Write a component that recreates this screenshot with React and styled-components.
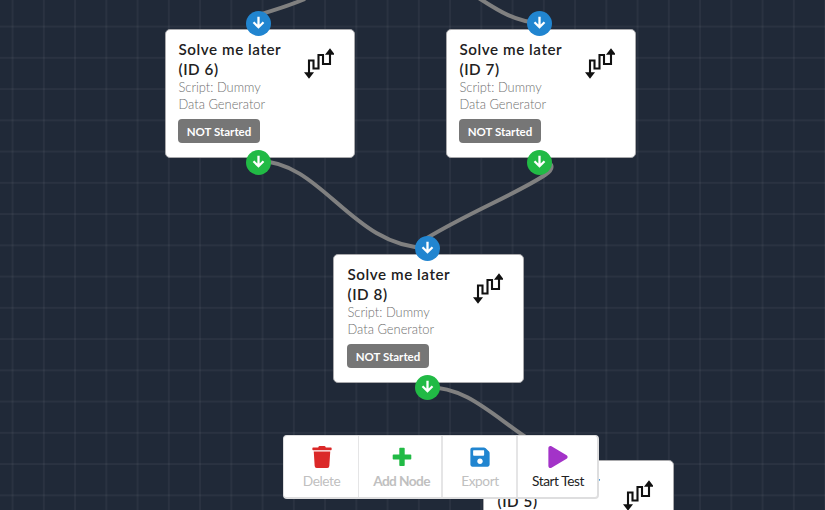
import React from "react";
import styled, { createGlobalStyle } from "styled-components";
import { FaTrash, FaSave, FaPlay } from "react-icons/fa";

const GlobalStyle = createGlobalStyle`
  * { box-sizing: border-box; }
  body { margin: 0; font-family: Lato, "Liberation Sans", sans-serif; overflow: hidden; }
`;

const Canvas = styled.main`
  position: relative;
  width: 825px;
  height: 510px;
  overflow: hidden;
  background-color: #202938;
  background-image:
    linear-gradient(to right, rgba(255, 255, 255, 0.042) 1.5px, transparent 1.5px),
    linear-gradient(to bottom, rgba(255, 255, 255, 0.042) 1.5px, transparent 1.5px);
  background-size: 31.25px 31.25px;
  background-position: 11.6px 25.6px;
`;

const Edges = styled.svg`
  position: absolute;
  inset: 0;
  fill: none;
  stroke: #808080;
  stroke-width: 4;
`;

const NodeCard = styled.article`
  position: absolute;
  left: ${(p) => p.$x}px;
  top: ${(p) => p.$y}px;
  width: ${(p) => 190 + p.$inset}px;
  height: 129px;
  padding: 9.5px 20.5px 0 ${(p) => 12.5 + p.$inset}px;
  display: flex;
  justify-content: space-between;
  align-items: flex-start;
  background: #fff;
  border: 1px solid #a9a9ac;
  border-radius: 5px;
`;

const NodeText = styled.div`
  width: 114px;
  white-space: nowrap;
`;

const Title = styled.h3`
  margin: 0;
  font-size: 15.2px;
  line-height: 20px;
  font-weight: 600;
  letter-spacing: 0.55px;
  color: #212121;
`;

const Script = styled.p`
  margin: 0;
  font-size: 12.9px;
  line-height: 17px;
  font-weight: 300;
  color: #707070;
`;

const Badge = styled.span`
  display: flex;
  align-items: center;
  justify-content: center;
  width: 82px;
  height: 24px;
  margin: 6px 0 0 -0.5px;
  border-radius: 4px;
  background: #767676;
  color: #fff;
  font-size: 11.5px;
  font-weight: 700;
`;

const Signal = styled.svg`
  width: 30px;
  height: 32px;
  margin-top: 8px;
  flex: none;
  fill: none;
  stroke: #111;
  stroke-width: 2.1;
`;

const Port = styled.span`
  position: absolute;
  left: ${(p) => 79.5 + p.$inset}px;
  ${(p) => (p.$out ? "top: 120px;" : "top: -19px;")}
  width: 25px;
  height: 25px;
  border-radius: 50%;
  display: grid;
  place-items: center;
  background: ${(p) => (p.$out ? "#21ba45" : "#2185d0")};
`;

const Arrow = styled.svg`
  width: 13px;
  height: 13px;
  margin-bottom: 2px;
  fill: none;
  stroke: #fff;
  stroke-width: 2.3;
`;

const Toolbar = styled.nav`
  position: absolute;
  left: 283px;
  top: 435px;
  width: 316px;
  height: 64px;
  display: grid;
  grid-template-columns: 75px 84px 75px 1fr;
  background: #fff;
  border: 1px solid #dededf;
  border-right-width: 2px;
  border-bottom-width: 2px;
  border-radius: 4px;
  overflow: hidden;
`;

const Tool = styled.button`
  display: flex;
  flex-direction: column;
  align-items: center;
  padding: 10px 0 0 ${(p) => p.$shift || 1}px;
  border: 0;
  border-right: ${(p) => p.$divider || 0}px solid #e5e5e6;
  background: none;
  font: ${(p) => p.$weight || 400} 13.7px/17px Lato, sans-serif;
  letter-spacing: ${(p) => (p.$weight ? -0.6 : -0.42)}px;
  color: ${(p) => (p.$active ? "#222" : "#c0c0c0")};
  white-space: nowrap;
  svg { width: 22px; height: 22px; margin-bottom: 4px; color: ${(p) => p.$tint}; }
`;

const nodes = [
  { id: 6, x: 165, y: 28.5, inset: 0 },
  { id: 7, x: 446, y: 28.5, inset: 0 },
  { id: 8, x: 333, y: 253.5, inset: 1 },
  { id: 5, x: 483, y: 460, inset: 1 },
];

function DownArrow() {
  return (
    <Arrow viewBox="0 0 13 13">
      <path d="M6.5 0.8V11M1.5 6.3L6.5 11.2L11.5 6.3" />
    </Arrow>
  );
}

function Node({ id, x, y, inset }) {
  return (
    <NodeCard $x={x} $y={y} $inset={inset}>
      <NodeText>
        <Title>Solve me later<br />(ID {id})</Title>
        <Script>Script: Dummy<br />Data Generator</Script>
        <Badge>NOT Started</Badge>
      </NodeText>
      <Signal viewBox="0 0 30 32">
        <path d="M5 29V13.5H9.5V21.5H14.5V8H19V17H26V3" />
        <path d="M1.500 26H8.500L5 30.500ZM22.500 7H29.500L26 2.500Z" fill="#111" strokeWidth="1.5" />
      </Signal>
      <Port $inset={inset}><DownArrow /></Port>
      <Port $inset={inset} $out><DownArrow /></Port>
    </NodeCard>
  );
}

export default function App() {
  return (
    <>
      <GlobalStyle />
      <Canvas>
        <Edges width="825" height="510">
          <path d="M258 15C268 12 286 7 305 -1" />
          <path d="M474 -5C496 9 514 22 540 23" />
          <path d="M258 161C322 161 352 247 427 248" />
          <path d="M540 161C552 160 556 168 545 175C516 194 470 212 427 238" />
          <path d="M427 387C464 387 488 411 524 436C545 450 562 459 578 460" />
        </Edges>
        {nodes.map((node) => <Node key={node.id} {...node} />)}
        <Toolbar>
          <Tool $tint="#db2828" $divider={1}><FaTrash />Delete</Tool>
          <Tool $tint="#21ba45" $divider={2} $weight={700} $shift={3}>
            <svg viewBox="0 0 22 22" fill="currentColor">
              <path d="M8.300 2.500q0-.8.8-.8h3.800q.8 0 .8.8V8.500h5.800q.8 0 .8.8v3.400q0 .8-.8.8H13.700v5.800q0 .8-.8.8H9.100q-.8 0-.8-.8V13.500H2.500q-.8 0-.8-.8V9.300q0-.8.8-.8H8.300Z" />
            </svg>
            Add Node
          </Tool>
          <Tool $tint="#2185d0" $divider={2}><FaSave />Export</Tool>
          <Tool $tint="#a333c8" $active><FaPlay />Start Test</Tool>
        </Toolbar>
      </Canvas>
    </>
  );
}
